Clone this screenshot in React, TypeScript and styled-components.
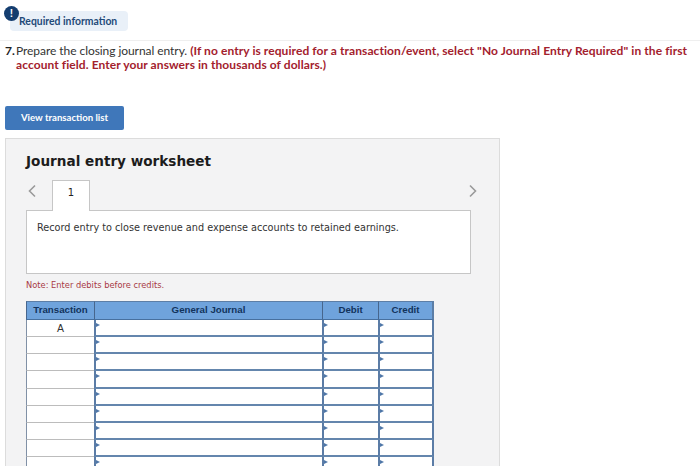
import React from "react";
import styled, { createGlobalStyle } from "styled-components";

const Global = createGlobalStyle`
  html, body { margin: 0; padding: 0; background: #fff; }
  body { width: 700px; height: 466px; overflow: hidden; font-family: "Lato", "Liberation Sans", sans-serif; }
`;
const Page = styled.div`
  width: 700px; height: 466px; overflow: hidden; display: flex; flex-direction: column;
`;
const BadgeRow = styled.div`
  padding: 11px 0 0 10px; height: 29px; flex: none;
`;
const Badge = styled.div`
  position: relative; width: 118px; height: 20px; border-radius: 4px; background: #e9f0f8;
  color: #1f4a78; font: 700 10.4px/20px "Lato", sans-serif; padding-left: 9px; box-sizing: border-box;
  white-space: nowrap;
`;
const BadgeIcon = styled.span`
  position: absolute; left: -6px; top: -5px; width: 15px; height: 15px; border-radius: 50%;
  background: #143d6f; color: #fff; font: 700 10px/15px "Liberation Sans", sans-serif; text-align: center;
`;
const Question = styled.div`
  border-top: 1px solid #efefef; padding: 3px 0 0 5px; height: 66px; flex: none; box-sizing: border-box;
  font: 400 12px/13.5px "Lato", sans-serif; color: #333; display: flex; gap: 2px;
`;
const Num = styled.span` font-weight: 700; color: #222; width: 9px; flex: none; `;
const Body = styled.div` width: 682px; letter-spacing: -.06px; `;
const Red = styled.b` color: #a3212d; font-weight: 700; letter-spacing: .08px; `;
const ViewBtn = styled.button`
  margin-left: 5px; width: 119px; height: 24px; border: 0; border-radius: 2px; background: #3f77ba; color: #fff;
  font: 700 9.6px/24px "Lato", sans-serif; padding: 0; flex: none;
`;
const Panel = styled.section`
  margin: 8px 0 0 5px; width: 495px; flex: 1; box-sizing: border-box; background: #f3f3f4;
  border: 1px solid #dcdcdc; border-bottom: 0; padding: 13px 28px 0 20px;
`;
const Title = styled.h2`
  margin: 0; font: 700 13.6px/19px "DejaVu Sans", sans-serif; color: #1c1c1c;
`;
const Tabs = styled.div`
  display: flex; align-items: flex-start; height: 30px; margin-top: 9px; position: relative; z-index: 1;
`;
const Chevron = styled.svg` width: 10px; height: 14px; flex: none; fill: none; stroke: #9a9a9a; stroke-width: 1.6; `;
const PrevSlot = styled.div` width: 26px; height: 21px; display: flex; align-items: center; padding-left: 1px; box-sizing: border-box; `;
const NextSlot = styled.div` margin-left: auto; margin-right: -7px; height: 21px; display: flex; align-items: center; `;
const Tab = styled.div`
  width: 38px; height: 31px; box-sizing: border-box; background: #fff; border: 1px solid #c6c6c6; border-bottom: 0;
  text-align: center; font: 400 10px/23px "DejaVu Sans", sans-serif; color: #222;
`;
const Prompt = styled.div`
  height: 64px; box-sizing: border-box; background: #fff; border: 1px solid #c6c6c6; padding: 10px;
  font: 400 9.7px/13px "DejaVu Sans", sans-serif; color: #333;
`;
const Note = styled.div`
  margin-top: 6px; height: 21px; font: 400 8.3px/11px "DejaVu Sans", sans-serif; color: #a83a44;
`;
const Grid = styled.div`
  width: 408px; display: grid; grid-template-columns: 68px 228px 56px 56px;
  grid-template-rows: 19px repeat(9, 17.15px);
`;
const Head = styled.div`
  background: #6fa3dc; color: #12335c; font: 700 9.7px/16px "Liberation Sans", sans-serif; text-align: center;
  border-top: 1px solid #5c7ea6; border-bottom: 1px solid #47709f; border-left: 1px solid #47668d; box-sizing: border-box;
  &:nth-child(4) { border-right: 2px solid #5c7ea6; }
`;
const TxCell = styled.div`
  background: #fff; box-sizing: border-box; border-left: 1px solid #8090a6; border-bottom: 1px solid #bcbcbc;
  text-align: center; font: 400 10.5px/16px "Liberation Sans", sans-serif; color: #333;
`;
const Input = styled.div<{ $last?: boolean }>`
  position: relative; background: #fff; box-sizing: border-box; border-left: 2px solid #5b7ca6; border-bottom: 2px solid #6486ad;
  ${p => (p.$last ? "border-right: 2px solid #5b7ca6;" : "")}
  &::before {
    content: ""; position: absolute; left: 0; top: 3px; border-left: 4px solid #4f77a8;
    border-top: 2.5px solid transparent; border-bottom: 2.5px solid transparent;
  }
`;

export default function App() {
  const rows = Array.from({ length: 9 }, (_, i) => i);
  return (
    <Page>
      <Global />
      <BadgeRow>
        <Badge><BadgeIcon>!</BadgeIcon>Required information</Badge>
      </BadgeRow>
      <Question>
        <Num>7.</Num>
        <Body>
          Prepare the closing journal entry. <Red>(If no entry is required for a transaction/event, select "No Journal Entry Required" in the first account field. Enter your answers in thousands of dollars.)</Red>
        </Body>
      </Question>
      <ViewBtn>View transaction list</ViewBtn>
      <Panel>
        <Title>Journal entry worksheet</Title>
        <Tabs>
          <PrevSlot><Chevron viewBox="0 0 10 14"><path d="M8 1.5 2.5 7 8 12.5" /></Chevron></PrevSlot>
          <Tab>1</Tab>
          <NextSlot><Chevron viewBox="0 0 10 14"><path d="M2 1.5 7.5 7 2 12.5" /></Chevron></NextSlot>
        </Tabs>
        <Prompt>Record entry to close revenue and expense accounts to retained earnings.</Prompt>
        <Note>Note: Enter debits before credits.</Note>
        <Grid>
          <Head>Transaction</Head>
          <Head>General Journal</Head>
          <Head>Debit</Head>
          <Head>Credit</Head>
          {rows.map(i => (
            <React.Fragment key={i}>
              <TxCell>{i === 0 ? "A" : ""}</TxCell>
              <Input />
              <Input />
              <Input $last />
            </React.Fragment>
          ))}
        </Grid>
      </Panel>
    </Page>
  );
}
